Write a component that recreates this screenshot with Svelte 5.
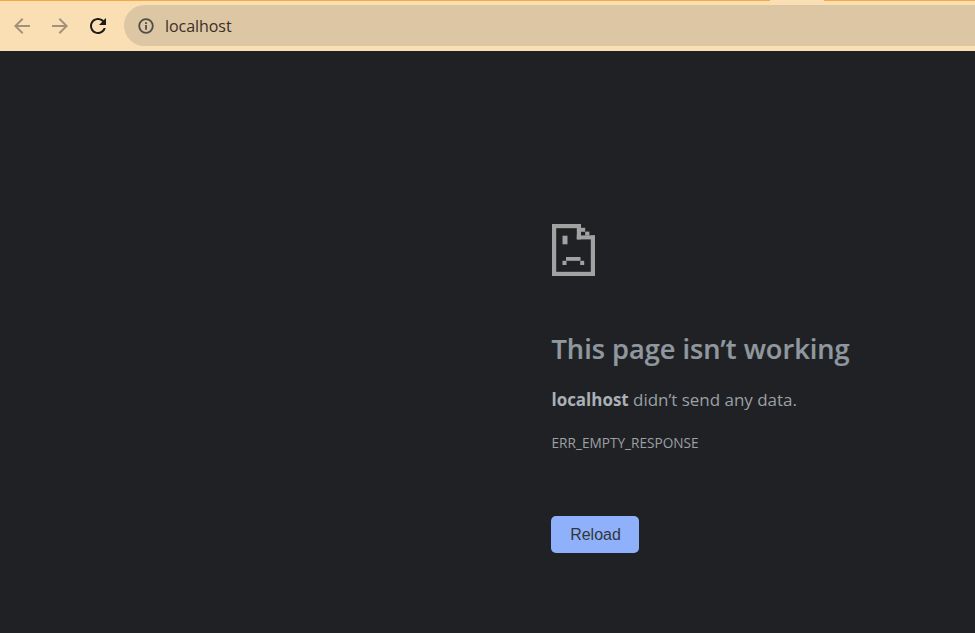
<script>
    const title = 'This page isn’t working';
</script>

<div class="page">
    <header class="toolbar">
        <div class="tabstrip"><span class="tabgap"></span></div>
        <div class="bar">
            <svg class="nav" viewBox="0 0 24 24" width="24" height="24"><path d="M20 11H7.8l5.6-5.6L12 4l-8 8 8 8 1.4-1.4L7.8 13H20z" fill="#a39179"/></svg>
            <svg class="nav" viewBox="0 0 24 24" width="24" height="24"><path d="M4 11h12.2l-5.6-5.6L12 4l8 8-8 8-1.4-1.4 5.6-5.6H4z" fill="#a39179"/></svg>
            <svg class="nav" viewBox="0 0 24 24" width="24" height="24"><path d="M17.65 6.35C16.2 4.9 14.21 4 12 4c-4.42 0-7.99 3.58-7.99 8s3.57 8 7.99 8c3.73 0 6.84-2.55 7.73-6h-2.08c-.82 2.33-3.04 4-5.65 4-3.31 0-6-2.69-6-6s2.69-6 6-6c1.66 0 3.14.69 4.22 1.78L13 11h7V4l-2.35 2.35z" fill="#1d1c1a"/></svg>
            <div class="omnibox">
                <svg viewBox="0 0 20 20" width="20" height="20"><circle cx="10" cy="10" r="6.8" fill="none" stroke="#4f4d4a" stroke-width="1.8"/><rect x="9.1" y="9" width="1.8" height="4.8" fill="#4f4d4a"/><rect x="9.1" y="6.2" width="1.8" height="1.8" fill="#4f4d4a"/></svg>
                <span class="url">localhost</span>
            </div>
        </div>
    </header>

    <main class="content">
        <svg class="sad" viewBox="0 0 43 52" width="43" height="52">
            <g fill="#a2a2a2">
                <rect x="0" y="0" width="29" height="4.2"/>
                <rect x="0" y="0" width="4.2" height="52"/>
                <rect x="0" y="47.8" width="43" height="4.2"/>
                <rect x="38.8" y="11.4" width="4.2" height="40.6"/>
                <rect x="24.8" y="0" width="4.2" height="15.4"/>
                <rect x="24.8" y="11.4" width="18.2" height="4"/>
                <rect x="29" y="3.8" width="4.2" height="4"/>
                <rect x="33.2" y="7.6" width="4.2" height="4"/>
                <rect x="10.5" y="11.7" width="5" height="8.6"/>
                <rect x="14" y="33" width="14.5" height="3.8"/>
                <rect x="10.5" y="36.8" width="4" height="4.2"/>
                <rect x="28.2" y="36.8" width="4" height="4.2"/>
            </g>
        </svg>
        <h1>{title}</h1>
        <p class="msg"><strong>localhost</strong> didn’t send any data.</p>
        <p class="code">ERR_EMPTY_RESPONSE</p>
        <button class="reload">Reload</button>
    </main>
</div>

<style>
    :global(body) {
        margin: 0;
        background: #202124;
    }

    .page {
        width: 975px;
        height: 633px;
        overflow: hidden;
        background: #202124;
        font-family: "Open Sans", "Noto Sans", sans-serif;
    }

    .toolbar {
        height: 51px;
        background: #fbdfb4;
    }

    .tabstrip {
        height: 1px;
        background: #f9a83e;
        display: flex;
        justify-content: flex-end;
        padding-right: 151px;
    }

    .tabgap {
        width: 54px;
        background: #fbdfb4;
    }

    .bar {
        display: flex;
        align-items: center;
        height: 49px;
        padding-left: 10px;
    }

    .nav {
        margin-right: 14px;
        flex: none;
    }

    .omnibox {
        flex: 1;
        height: 41px;
        margin-right: -30px;
        background: #dcc6a4;
        border-radius: 21px;
        display: flex;
        align-items: center;
        padding-left: 12px;
        gap: 9px;
    }

    .url {
        font-size: 16px;
        letter-spacing: -0.05px;
        color: #3c2e28;
    }

    .content {
        padding: 173px 0 0 551px;
    }

    .sad {
        display: block;
        margin-left: 0.5px;
    }

    h1 {
        margin: 55px 0 0 0.5px;
        font-size: 27.2px;
        line-height: 36px;
        font-weight: 600;
        color: #8f989f;
        -webkit-text-stroke: 0.2px #8f989f;
    }

    .msg {
        margin: 21px 0 0 0.5px;
        font-size: 17px;
        letter-spacing: -0.03px;
        line-height: 24px;
        color: #9aa0a6;
    }

    .msg strong {
        font-weight: 700;
        color: #aab0b6;
    }

    .code {
        margin: 22px 0 0 0.5px;
        font-size: 13.65px;
        line-height: 18px;
        color: #9aa0a6;
    }

    .reload {
        display: block;
        margin-top: 64px;
        width: 88px;
        height: 37px;
        padding: 0 0 0 1px;
        border: none;
        border-radius: 5px;
        background: #8fb1fb;
        color: #33363c;
        font-family: "Liberation Sans", Arial, sans-serif;
        font-size: 16px;
    }
</style>
